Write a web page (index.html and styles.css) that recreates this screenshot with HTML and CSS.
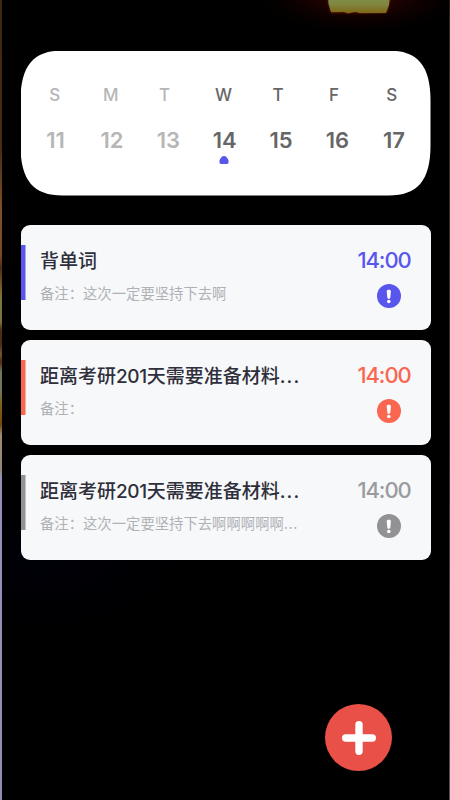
FILE: index.html
```html
<!DOCTYPE html>
<html lang="zh-CN">
<head>
<meta charset="utf-8">
<title>日程</title>
<link rel="stylesheet" href="styles.css">
</head>
<body>
<main class="screen">
  <svg class="sun" width="450" height="50" viewBox="0 0 450 50" aria-hidden="true">
    <defs>
      <radialGradient id="halo" gradientUnits="userSpaceOnUse" cx="359" cy="-6" r="115" gradientTransform="translate(359 -6) scale(1 .38) translate(-359 6)">
        <stop offset="0" stop-color="#300600"/><stop offset=".4" stop-color="#1a0200"/><stop offset="1" stop-color="#000" stop-opacity="0"/>
      </radialGradient>
      <linearGradient id="disc" x1="0" y1="0" x2="0" y2="1">
        <stop offset="0" stop-color="#7c934d"/><stop offset=".5" stop-color="#80853f"/><stop offset="1" stop-color="#806515"/>
      </linearGradient>
      <filter id="glow" x="-20%" y="-50%" width="140%" height="200%"><feGaussianBlur stdDeviation="1.5"/></filter>
      <filter id="soft"><feGaussianBlur stdDeviation=".5"/></filter>
    </defs>
    <rect width="450" height="50" fill="url(#halo)"/>
    <path d="M327-4 331 12.5H387L391-4Z" fill="#701300" filter="url(#glow)"/>
    <path d="M328-4 328.5 4 331 12.2 344 12 348 13.5 352 12.5 356 12 360 13.3 386 13 389 5 390-4Z" fill="url(#disc)" filter="url(#soft)"/>
  </svg>
  <section class="calendar">
    <div class="weekdays"><span class="past">S</span><span class="past">M</span><span class="past">T</span><span>W</span><span>T</span><span>F</span><span>S</span></div>
    <div class="dates"><span class="past">11</span><span class="past">12</span><span class="past">13</span><span>14</span><span>15</span><span>16</span><span>17</span></div>
    <svg class="marker" width="10" height="8" viewBox="0 0 10 8" aria-hidden="true"><path d="M5 0C6.8 0 7.7 1 8.5 2.5 9.5 4 9.8 5.2 9.5 6.5 9.2 7.7 8.5 8 7.4 8H2.6C1.5 8 .8 7.7.5 6.5.2 5.2.5 4 1.5 2.5 2.3 1 3.2 0 5 0Z" fill="#5856ed"/></svg>
  </section>
  <section class="tasks">
    <article class="task blue">
      <div class="info"><h2>背单词</h2><p>备注：这次一定要坚持下去啊</p></div>
      <div class="status"><time>14:00</time>
        <svg width="24" height="24" viewBox="0 0 24 24" aria-hidden="true"><circle cx="12" cy="12" r="12"/><path d="M9.7 7.6C9.6 6.3 10.4 5.7 11.8 5.7S14 6.3 13.9 7.6L13.3 13.5C13.2 14.5 12.7 14.8 11.8 14.8S10.4 14.5 10.3 13.5Z" fill="#fff"/><circle cx="11.8" cy="17.5" r="1.8" fill="#fff"/></svg></div>
    </article>
    <article class="task red">
      <div class="info"><h2>距离考研<span class="num">201</span>天需要准备材料<span class="dots">...</span></h2><p>备注：</p></div>
      <div class="status"><time>14:00</time>
        <svg width="24" height="24" viewBox="0 0 24 24" aria-hidden="true"><circle cx="12" cy="12" r="12"/><path d="M9.7 7.6C9.6 6.3 10.4 5.7 11.8 5.7S14 6.3 13.9 7.6L13.3 13.5C13.2 14.5 12.7 14.8 11.8 14.8S10.4 14.5 10.3 13.5Z" fill="#fff"/><circle cx="11.8" cy="17.5" r="1.8" fill="#fff"/></svg></div>
    </article>
    <article class="task gray">
      <div class="info"><h2>距离考研<span class="num">201</span>天需要准备材料<span class="dots">...</span></h2><p>备注：这次一定要坚持下去啊啊啊啊啊<span class="dots">...</span></p></div>
      <div class="status"><time>14:00</time>
        <svg width="24" height="24" viewBox="0 0 24 24" aria-hidden="true"><circle cx="12" cy="12" r="12"/><path d="M9.7 7.6C9.6 6.3 10.4 5.7 11.8 5.7S14 6.3 13.9 7.6L13.3 13.5C13.2 14.5 12.7 14.8 11.8 14.8S10.4 14.5 10.3 13.5Z" fill="#fff"/><circle cx="11.8" cy="17.5" r="1.8" fill="#fff"/></svg></div>
    </article>
  </section>
  <button class="add" aria-label="添加"><svg width="34" height="34" viewBox="0 0 34 34"><path d="M17 3.7V30.3M3.7 17H30.3" stroke="#fff" stroke-width="7.4" stroke-linecap="round"/></svg></button>
</main>
</body>
</html>
```
FILE: styles.css
```css
* { box-sizing: border-box; }
body { margin: 0; background: #000; font-family: Inter, "Noto Sans CJK SC", sans-serif; }
.screen {
  position: relative;
  width: 450px;
  height: 800px;
  overflow: hidden;
  padding: 50.5px 19.5px 0 20.5px;
  background:
    linear-gradient(#3d2810 0, #4a2c14 150px, #805027 210px, #7d4825 255px, #532b11 268px, #80662f 292px, #787a3c 300px, #77743c 322px, #512a10 330px, #522b10 345px, #76552d 354px, #522b12 362px, #72765f 372px, #72765f 390px, #806018 405px, #75480f 425px, #a18b72 435px, #928878 470px, #9690b8 478px, #928cb3 100%) 0 0 / 2px 100% no-repeat,
    linear-gradient(#29291e, #343435 60%, #515151) 100% 0 / 1px 100% no-repeat,
    radial-gradient(ellipse 160px 80px at 40px 560px, #000008, transparent),
    #000;
}
.sun { position: absolute; left: 0; top: 0; }
.calendar {
  width: 410px;
  height: 145px;
  padding-top: 32px;
  background: #fff;
  clip-path: path("M42 0H368C397 0 410 15 410 50V95C410 130 397 145 368 145H42C13 145 0 130 0 95V50C0 15 13 0 42 0Z");
  color: #666;
}
.weekdays, .dates { display: grid; text-align: center; line-height: 24px; }
.weekdays { grid-template-columns: 56px 56px 51.6px 66.4px 42.6px 69.4px 46px; padding-left: 6.2px; font-size: 17px; font-weight: 500; }
.dates { grid-template-columns: repeat(7, 56.4px); margin-top: 21px; padding-left: 6.8px; font-size: 22px; font-weight: 600; letter-spacing: -.1px; }
.past { color: #b6b6b6; }
.marker { display: block; margin: 4.5px 0 0 198.7px; }
.tasks { display: grid; gap: 9.7px; margin-top: 29.5px; }
.task {
  display: flex;
  justify-content: space-between;
  height: 105.2px;
  padding: 0 19.5px;
  border-radius: 9px;
  color: var(--accent);
  background: linear-gradient(var(--accent), var(--accent)) 0 20px / 4.5px 55px no-repeat, #f7f8fa;
}
.blue { --accent: #5856ed; }
.red { --accent: #fa6650; }
.gray { --accent: #929295; }
.gray time { color: #9b9b9d; }
.info { padding-top: 23px; white-space: nowrap; }
h2 { margin: 0; font-size: 19px; line-height: 28px; font-weight: 500; color: #2e2f3a; }
p { margin: 7.4px 0 0; font-size: 14.35px; line-height: 22px; color: #b0b1b6; }
.num { letter-spacing: -.4px; }
.dots { letter-spacing: 1.1px; }
p .dots { letter-spacing: .6px; }
.status { display: flex; flex-direction: column; align-items: flex-end; padding-top: 21px; }
time { font-size: 22px; line-height: 28px; font-weight: 500; letter-spacing: -1.1px; margin-right: .4px; }
.status svg { margin: 10.4px 10px 0 0; fill: var(--accent); }
.add {
  position: absolute;
  left: 325.3px;
  top: 704px;
  display: grid;
  place-items: center;
  width: 67px;
  height: 67px;
  padding: 0;
  border: 0;
  border-radius: 50%;
  background: #e85048;
}
```
